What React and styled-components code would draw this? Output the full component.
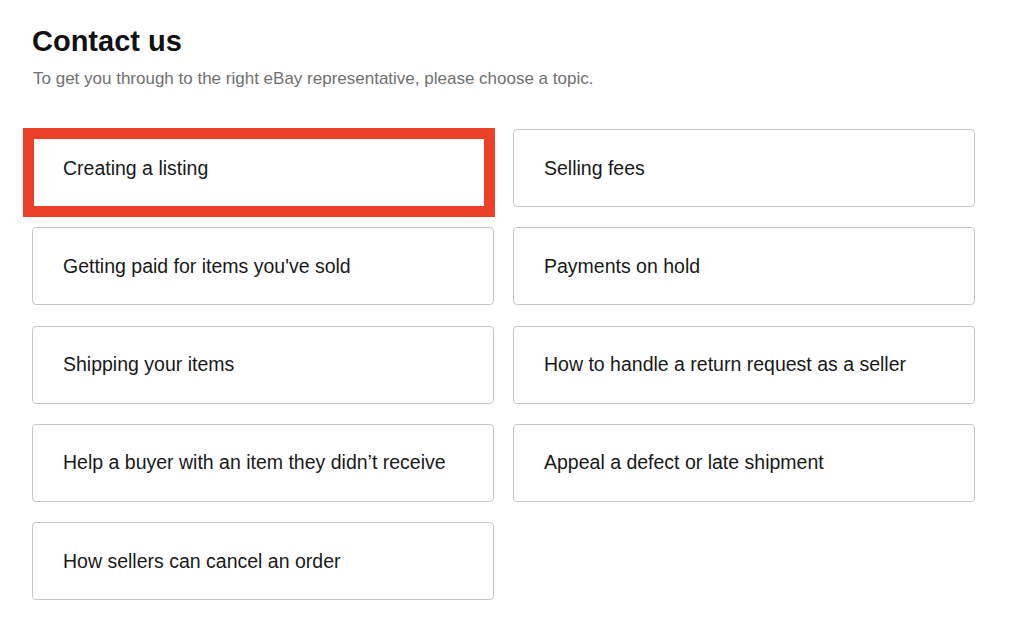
import React from "react";
import styled, { createGlobalStyle } from "styled-components";

const topics = [
  "Creating a listing",
  "Selling fees",
  "Getting paid for items you've sold",
  "Payments on hold",
  "Shipping your items",
  "How to handle a return request as a seller",
  "Help a buyer with an item they didn’t receive",
  "Appeal a defect or late shipment",
  "How sellers can cancel an order",
];

const GlobalStyle = createGlobalStyle`
  body {
    margin: 0;
    background: #ffffff;
    font-family: "Liberation Sans", Arial, sans-serif;
    color: #111820;
  }
`;

const Page = styled.div`
  padding: 25px 32px 0 32px;
`;

const Title = styled.h1`
  margin: 0;
  font-size: 29px;
  font-weight: 700;
  line-height: 33px;
  color: #111111;
`;

const Subtitle = styled.p`
  margin: 11px 0 0 1px;
  font-size: 17px;
  line-height: 20px;
  color: #707070;
`;

const Grid = styled.div`
  margin-top: 40px;
  display: grid;
  grid-template-columns: 462px 462px;
  grid-auto-rows: 78px;
  column-gap: 19px;
  row-gap: 20.25px;
`;

const Card = styled.div`
  position: relative;
  display: flex;
  align-items: center;
  padding: 0 30px;
  border: 1px solid #c7c7c7;
  border-radius: 4px;
  font-size: 19.5px;
  color: #191919;
`;

const Highlight = styled.div`
  position: absolute;
  left: -10px;
  top: -2px;
  width: 472px;
  height: 89px;
  box-sizing: border-box;
  border: 11px solid #ea4128;
  pointer-events: none;
`;

export default function App() {
  return (
    <Page>
      <GlobalStyle />
      <Title>Contact us</Title>
      <Subtitle>
        To get you through to the right eBay representative, please choose a topic.
      </Subtitle>
      <Grid>
        {topics.map((t, i) => (
          <Card key={t}>
            {i === 0 && <Highlight />}
            {t}
          </Card>
        ))}
      </Grid>
    </Page>
  );
}
